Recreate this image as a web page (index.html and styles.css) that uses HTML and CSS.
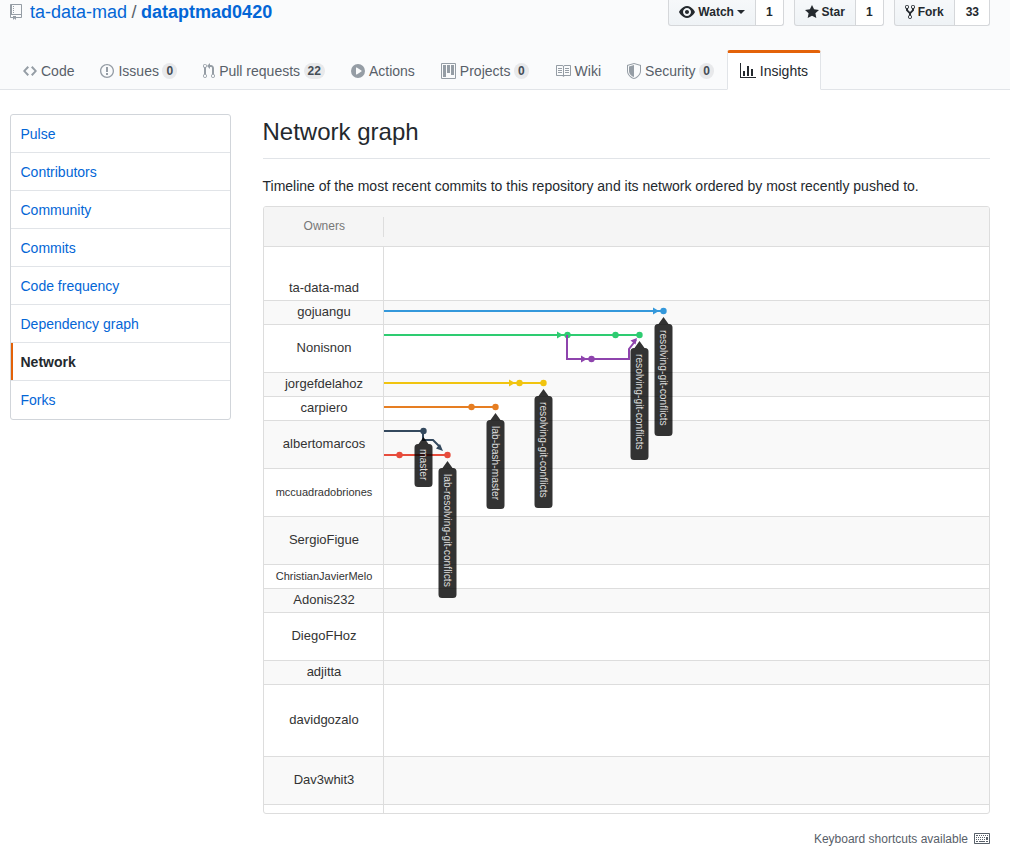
FILE: index.html
```html
<!DOCTYPE html>
<html lang="en">
<head>
  <meta charset="UTF-8" />
  <title>Network graph</title>
  <link rel="stylesheet" href="styles.css">
</head>
<body>
  <header class="pagehead">
    <div class="pagehead-top">
      <h2 class="repo-title">
        <svg class="repo-icon" width="12" height="16" viewBox="0 0 12 16"><path d="M4 9H3V8h1v1zm0-3H3v1h1V6zm0-2H3v1h1V4zm0-2H3v1h1V2zm8-1v12c0 .55-.45 1-1 1H6v2l-1.500-1.500L3 16v-2H1c-.55 0-1-.45-1-1V1c0-.55.45-1 1-1h10c.55 0 1 .45 1 1zm-1 10H1v2h2v-1h3v1h5v-2zm0-10H2v9h9V1z"/></svg>
        <a href="#">ta-data-mad</a><span class="slash">/</span><a href="#"><strong>dataptmad0420</strong></a>
      </h2>
      <div class="actions">
        <div class="btn-pair">
          <a class="btn" href="#"><svg width="16" height="16" viewBox="0 0 16 16"><path d="M8.06 2C3 2 0 8 0 8s3 6 8.06 6C13 14 16 8 16 8s-3-6-7.94-6zM8 12c-2.2 0-4-1.78-4-4 0-2.2 1.8-4 4-4 2.22 0 4 1.8 4 4 0 2.22-1.78 4-4 4zm2-4c0 1.11-.89 2-2 2-1.11 0-2-.89-2-2 0-1.11.89-2 2-2 1.11 0 2 .89 2 2z"/></svg>Watch<span class="caret"></span></a>
          <a class="count" href="#">1</a>
        </div>
        <div class="btn-pair">
          <a class="btn" href="#"><svg width="14" height="16" viewBox="0 0 14 16"><path d="M14 6l-4.900-.64L7 1 4.900 5.360 0 6l3.600 3.260L2.670 14 7 11.670 11.330 14l-.93-4.740L14 6z"/></svg>Star</a>
          <a class="count" href="#">1</a>
        </div>
        <div class="btn-pair">
          <a class="btn" href="#"><svg width="10" height="16" viewBox="0 0 10 16"><path d="M8 1a1.993 1.993 0 00-1 3.72V6L5 8 3 6V4.72A1.993 1.993 0 002 1a1.993 1.993 0 00-1 3.72V6.5l3 3v1.78A1.993 1.993 0 005 15a1.993 1.993 0 001-3.72V9.5l3-3V4.72A1.993 1.993 0 008 1zM2 4.2C1.34 4.2.8 3.65.8 3c0-.65.55-1.2 1.2-1.2.65 0 1.2.55 1.2 1.2 0 .65-.55 1.2-1.2 1.2zm3 10c-.66 0-1.2-.55-1.2-1.2 0-.65.55-1.2 1.2-1.2.65 0 1.2.55 1.2 1.2 0 .65-.55 1.2-1.2 1.2zm3-10c-.66 0-1.2-.55-1.2-1.2 0-.65.55-1.2 1.2-1.2.65 0 1.2.55 1.2 1.2 0 .65-.55 1.2-1.2 1.2z"/></svg>Fork</a>
          <a class="count" href="#">33</a>
        </div>
      </div>
    </div>
    <nav class="reponav">
      <a class="tab" href="#"><svg width="14" height="16" viewBox="0 0 14 16"><path d="M9.5 3L8 4.5 11.5 8 8 11.5 9.5 13 14 8 9.5 3zm-5 0L0 8l4.5 5L6 11.5 2.5 8 6 4.5 4.5 3z"/></svg>Code</a>
      <a class="tab" href="#"><svg width="14" height="16" viewBox="0 0 14 16"><path d="M7 2.3c3.14 0 5.7 2.56 5.7 5.7s-2.56 5.7-5.7 5.7A5.71 5.71 0 011.3 8c0-3.14 2.56-5.7 5.7-5.7zM7 1C3.14 1 0 4.14 0 8s3.14 7 7 7 7-3.14 7-7-3.14-7-7-7zm1 3H6v5h2V4zm0 6H6v2h2v-2z"/></svg>Issues<span class="counter">0</span></a>
      <a class="tab" href="#"><svg width="12" height="16" viewBox="0 0 12 16"><path d="M11 11.28V5c-.03-.78-.34-1.47-.94-2.06C9.46 2.35 8.78 2.03 8 2H7V0L4 3l3 3V4h1c.27.02.48.11.69.31.21.2.3.42.31.69v6.28A1.993 1.993 0 0010 15a1.993 1.993 0 001-3.72zm-1 2.92c-.66 0-1.2-.55-1.2-1.2 0-.65.55-1.2 1.2-1.2.65 0 1.2.55 1.2 1.2 0 .65-.55 1.2-1.2 1.2zM4 3c0-1.11-.89-2-2-2a1.993 1.993 0 00-1 3.72v6.56A1.993 1.993 0 002 15a1.993 1.993 0 001-3.72V4.72c.59-.34 1-.98 1-1.72zm-.8 10c0 .66-.55 1.2-1.2 1.2-.65 0-1.2-.55-1.2-1.2 0-.65.55-1.2 1.2-1.2.65 0 1.2.55 1.2 1.2zM2 4.2C1.34 4.2.8 3.65.8 3c0-.65.55-1.2 1.2-1.2.65 0 1.2.55 1.2 1.2 0 .65-.55 1.2-1.2 1.2z"/></svg>Pull requests<span class="counter">22</span></a>
      <a class="tab" href="#"><svg width="14" height="16" viewBox="0 0 14 16"><path d="M14 8A7 7 0 110 8a7 7 0 0114 0zm-8.223 3.482l4.599-3.066a.5.5 0 000-.832L5.777 4.518A.5.5 0 005 4.934v6.132a.5.5 0 00.777.416z"/></svg>Actions</a>
      <a class="tab" href="#"><svg width="15" height="16" viewBox="0 0 15 16"><path d="M10 12h3V2h-3v10zm-4-2h3V2H6v8zm-4 4h3V2H2v12zm-1 1h13V1H1v14zM14 0H1a1 1 0 00-1 1v14a1 1 0 001 1h13a1 1 0 001-1V1a1 1 0 00-1-1z"/></svg>Projects<span class="counter">0</span></a>
      <a class="tab" href="#"><svg width="16" height="16" viewBox="0 0 16 16"><path d="M3 5h4v1H3V5zm0 3h4V7H3v1zm0 2h4V9H3v1zm11-5h-4v1h4V5zm0 2h-4v1h4V7zm0 2h-4v1h4V9zm2-6v9c0 .55-.45 1-1 1H9.5l-1 1-1-1H2c-.55 0-1-.45-1-1V3c0-.55.45-1 1-1h5.5l1 1 1-1H15c.55 0 1 .45 1 1zm-8 .5L7.5 3H2v9h6V3.5zm7-.5H9.5l-.5.5V12h6V3z"/></svg>Wiki</a>
      <a class="tab" href="#"><svg width="14" height="16" viewBox="0 0 14 16"><path d="M0 2l7-2 7 2v6.02C14 12.69 8.69 16 7 16c-1.69 0-7-3.31-7-7.98V2zm1 .75L7 1l6 1.75v5.268C13 12.104 8.449 15 7 15c-1.449 0-6-2.896-6-6.982V2.75zm1 .75L7 2v12c-1.207 0-5-2.482-5-5.985V3.5z"/></svg>Security<span class="counter">0</span></a>
      <a class="tab selected" href="#"><svg width="16" height="16" viewBox="0 0 16 16"><path d="M16 14v1H0V0h1v14h15zM5 13H3V8h2v5zm4 0H7V3h2v10zm4 0h-2V6h2v7z"/></svg>Insights</a>
    </nav>
  </header>

  <div class="layout">
    <nav class="menu">
      <a class="menu-item" href="#">Pulse</a>
      <a class="menu-item" href="#">Contributors</a>
      <a class="menu-item" href="#">Community</a>
      <a class="menu-item" href="#">Commits</a>
      <a class="menu-item" href="#">Code frequency</a>
      <a class="menu-item" href="#">Dependency graph</a>
      <a class="menu-item selected" href="#">Network</a>
      <a class="menu-item" href="#">Forks</a>
    </nav>

    <main class="content">
      <h1 class="subhead">Network graph</h1>
      <p class="intro">Timeline of the most recent commits to this repository and its network ordered by most recently pushed to.</p>

      <div class="network">
        <div class="network-head"><span class="owners-label">Owners</span></div>
        <div class="net-row h54 first"><span class="owner">ta-data-mad</span></div>
        <div class="net-row h24 alt"><span class="owner">gojuangu</span></div>
        <div class="net-row h48"><span class="owner">Nonisnon</span></div>
        <div class="net-row h24 alt"><span class="owner">jorgefdelahoz</span></div>
        <div class="net-row h24"><span class="owner">carpiero</span></div>
        <div class="net-row h48 alt"><span class="owner">albertomarcos</span></div>
        <div class="net-row h48"><span class="owner small">mccuadradobriones</span></div>
        <div class="net-row h48 alt"><span class="owner">SergioFigue</span></div>
        <div class="net-row h24"><span class="owner small">ChristianJavierMelo</span></div>
        <div class="net-row h24 alt"><span class="owner">Adonis232</span></div>
        <div class="net-row h48"><span class="owner">DiegoFHoz</span></div>
        <div class="net-row h24 alt"><span class="owner">adjitta</span></div>
        <div class="net-row h72"><span class="owner">davidgozalo</span></div>
        <div class="net-row h48 alt"><span class="owner">Dav3whit3</span></div>
        <div class="net-row last"><span class="owner"></span></div>

        <!-- viewBox uses page coordinates so commits read the same as the screenshot -->
        <svg class="graph" width="605" height="566" viewBox="384 247 605 566">
          <g class="branch" stroke="#3498db" fill="#3498db">
            <path class="ln" d="M384 311H663"/>
            <path class="hd" d="M653 307.500l6 3.500-6 3.500z"/>
            <circle cx="663.500" cy="311" r="3.200"/>
          </g>
          <g class="branch" stroke="#2ecc71" fill="#2ecc71">
            <path class="ln" d="M384 335H639"/>
            <path class="hd" d="M557 331.500l6 3.500-6 3.500z"/>
            <circle cx="567.500" cy="335" r="3.200"/>
            <circle cx="615.500" cy="335" r="3.200"/>
            <circle cx="639.500" cy="335" r="3.200"/>
          </g>
          <g class="branch" stroke="#8e44ad" fill="#8e44ad">
            <path class="ln" d="M567 335V359H629V349L636 340"/>
            <path class="hd" d="M581 355.500l6 3.500-6 3.500z"/>
            <path class="hd" d="M637 338l-1.500 6.500-5-4z"/>
            <circle cx="591.500" cy="359" r="3.200"/>
          </g>
          <g class="branch" stroke="#f1c40f" fill="#f1c40f">
            <path class="ln" d="M384 383H543"/>
            <path class="hd" d="M509 379.500l6 3.500-6 3.500z"/>
            <circle cx="519.500" cy="383" r="3.200"/>
            <circle cx="543.500" cy="383" r="3.200"/>
          </g>
          <g class="branch" stroke="#e67e22" fill="#e67e22">
            <path class="ln" d="M384 407H495"/>
            <circle cx="471.500" cy="407" r="3.200"/>
            <circle cx="495.500" cy="407" r="3.200"/>
          </g>
          <g class="branch" stroke="#34495e" fill="#34495e">
            <path class="ln" d="M384 431H423V440H433L440 447"/>
            <path class="hd" d="M443 451l-7-2.500 4-4.500z"/>
            <circle cx="423.500" cy="431" r="3.200"/>
          </g>
          <g class="branch" stroke="#e74c3c" fill="#e74c3c">
            <path class="ln" d="M384 455H447"/>
            <circle cx="399.500" cy="455" r="3.200"/>
            <circle cx="447.500" cy="455" r="3.200"/>
          </g>

          <path class="tag" d="M423.500 437l5 7h.5a3.500 3.500 0 013.500 3.500v36a3.500 3.500 0 01-3.500 3.500h-11a3.500 3.500 0 01-3.500-3.500v-36a3.500 3.500 0 013.500-3.500h.5z"/>
          <text class="tag-text" transform="translate(420 449) rotate(90)">master</text>

          <path class="tag" d="M447.500 461l5 7h.5a3.500 3.500 0 013.500 3.500v123a3.500 3.500 0 01-3.500 3.500h-11a3.500 3.500 0 01-3.500-3.500v-123a3.500 3.500 0 013.500-3.500h.5z"/>
          <text class="tag-text" transform="translate(444 474) rotate(90)">lab-resolving-git-conflicts</text>

          <path class="tag" d="M495.500 413l5 7h.5a3.500 3.500 0 013.500 3.500v82a3.500 3.500 0 01-3.500 3.500h-11a3.500 3.500 0 01-3.500-3.500v-82a3.500 3.500 0 013.500-3.500h.5z"/>
          <text class="tag-text" transform="translate(492 426) rotate(90)">lab-bash-master</text>

          <path class="tag" d="M543.500 389l5 7h.5a3.500 3.500 0 013.500 3.500v105a3.500 3.500 0 01-3.500 3.500h-11a3.500 3.500 0 01-3.500-3.500v-105a3.500 3.500 0 013.500-3.500h.5z"/>
          <text class="tag-text" transform="translate(540 402) rotate(90)">resolving-git-conflicts</text>

          <path class="tag" d="M639.500 341l5 7h.5a3.500 3.500 0 013.500 3.500v105a3.500 3.500 0 01-3.500 3.500h-11a3.500 3.500 0 01-3.500-3.500v-105a3.500 3.500 0 013.500-3.500h.5z"/>
          <text class="tag-text" transform="translate(636 354) rotate(90)">resolving-git-conflicts</text>

          <path class="tag" d="M663.500 317l5 7h.5a3.500 3.500 0 013.500 3.500v105a3.500 3.500 0 01-3.500 3.500h-11a3.500 3.500 0 01-3.500-3.500v-105a3.500 3.500 0 013.500-3.500h.5z"/>
          <text class="tag-text" transform="translate(660 330) rotate(90)">resolving-git-conflicts</text>
        </svg>
      </div>

      <div class="shortcuts">
        Keyboard shortcuts available
        <svg width="16" height="16" viewBox="0 0 16 16"><path d="M10 5H9V4h1v1zM3 6H2v1h1V6zm5-2H7v1h1V4zM4 4H2v1h2V4zm8 7h2v-1h-2v1zM8 7h1V6H8v1zm-4 3H2v1h2v-1zm8-6h-1v1h1V4zm2 0h-1v1h1V4zm-2 5h2V6h-2v3zm4-6v9c0 .55-.45 1-1 1H1c-.55 0-1-.45-1-1V3c0-.55.45-1 1-1h14c.55 0 1 .45 1 1zm-1 0H1v9h14V3zM6 7h1V6H6v1zm0-3H5v1h1V4zM4 7h1V6H4v1zm1 4h6v-1H5v1zm5-4h1V6h-1v1zM3 8H2v1h1V8zm5 0v1h1V8H8zM6 8v1h1V8H6zM5 8H4v1h1V8zm5 1h1V8h-1v1z"/></svg>
      </div>
    </main>
  </div>
</body>
</html>
```

FILE: styles.css
```css
* {
  box-sizing: border-box;
}
body {
  margin: 0;
  height: 861px;
  overflow: hidden;
  background: #fff;
  color: #24292e;
  font-family: "Liberation Sans", Arial, sans-serif;
  font-size: 14px;
  line-height: 20px;
}
a {
  color: #0366d6;
  text-decoration: none;
}
svg {
  fill-rule: evenodd;
}

/* repo header */
.pagehead {
  height: 90px;
  background: #fafbfc;
  border-bottom: 1px solid #e1e4e8;
}
.pagehead-top {
  height: 50px;
  padding: 0 20px 0 10px;
  display: flex;
  justify-content: space-between;
  align-items: flex-start;
}
.repo-title {
  margin: 0;
  font-size: 18px;
  font-weight: 400;
  line-height: 24px;
  color: #586069;
}
.repo-icon {
  fill: #959da5;
  margin-right: 3px;
  vertical-align: -2px;
}
.slash {
  margin: 0 0.25em;
}
.actions {
  display: flex;
  gap: 10px;
}
.btn-pair {
  display: flex;
  height: 26px;
  font-size: 12px;
  font-weight: 700;
}
.btn,
.count {
  display: flex;
  align-items: center;
  padding-bottom: 2px;
  color: #24292e;
  border: 1px solid #d5d7da;
  border-top: 0;
}
.btn {
  gap: 3px;
  padding-left: 10px;
  padding-right: 10px;
  background: linear-gradient(#f6f8fa, #eff3f6);
  border-radius: 0 0 0 3px;
}
.btn svg {
  fill: #24292e;
}
.count {
  padding-left: 10px;
  padding-right: 10px;
  background: #fff;
  border-left: 0;
  border-radius: 0 0 3px 0;
}
.btn-pair:last-child .count {
  padding-left: 11px;
}
.caret {
  width: 0;
  height: 0;
  border: 4px solid transparent;
  border-top-color: #24292e;
  border-bottom: 0;
}

/* tabs */
.reponav {
  display: flex;
  padding-left: 10px;
}
.tab {
  display: flex;
  align-items: center;
  height: 40px;
  padding: 0 12px;
  color: #586069;
  border: 1px solid transparent;
  border-top-width: 3px;
  border-radius: 3px 3px 0 0;
}
.tab svg {
  fill: #959da5;
  margin-right: 4px;
}
.tab.selected {
  color: #24292e;
  background: #fff;
  border-color: #e1e4e8 #e1e4e8 #fff;
  border-top-color: #e36209;
}
.tab.selected svg {
  fill: #24292e;
}
.counter {
  margin-left: 3.500px;
  padding: 2px 4px;
  font-size: 12px;
  font-weight: 700;
  line-height: 12px;
  color: #444d56;
  background: rgba(27, 31, 35, 0.08);
  border-radius: 20px;
}

/* page body */
.layout {
  display: flex;
  gap: 31.500px;
  padding: 24px 20px 0 10px;
}
.menu {
  width: 221px;
  height: 306px;
  flex: none;
  background: #fff;
  border: 1px solid #d1d5da;
  border-radius: 3px;
}
.menu-item {
  display: block;
  height: 38px;
  padding: 9px 10px 9px 9.500px;
  border-bottom: 1px solid #e1e4e8;
}
.menu-item:last-child {
  height: 37px;
  border-bottom: 0;
}
.menu-item.selected {
  font-weight: 700;
  color: #24292e;
  box-shadow: inset 2px 0 0 #e36209;
}
.content {
  flex: 1;
  min-width: 0;
}
.subhead {
  margin: 0;
  height: 45px;
  font-size: 24px;
  font-weight: 400;
  line-height: 36px;
  border-bottom: 1px solid #e1e4e8;
}
.intro {
  margin: 17px 0 10px;
}

/* network graph */
.network {
  position: relative;
  height: 608px;
  background: #fff;
  border: 1px solid #ddd;
  border-radius: 3px;
  overflow: hidden;
}
.network-head {
  height: 40px;
  padding-top: 10px;
  background: #f5f5f5;
  border-bottom: 1px solid #ddd;
}
.owners-label {
  display: block;
  width: 120.500px;
  height: 20px;
  padding-left: 2px;
  font-size: 12px;
  line-height: 19px;
  text-align: center;
  color: #777;
  border-right: 1px solid #ddd;
}
.net-row {
  display: flex;
  border-bottom: 1px solid #ddd;
}
.net-row.alt {
  background: #f9f9f9;
}
.net-row.h24 { height: 24px; }
.net-row.h48 { height: 48px; }
.net-row.h54 { height: 54px; }
.net-row.h72 { height: 72px; }
.net-row.last {
  height: 8px;
  border-bottom: 0;
}
.owner {
  width: 120.500px;
  display: flex;
  align-items: center;
  justify-content: center;
  padding: 0 0 2px 1.500px;
  font-size: 13px;
  color: #333;
  border-right: 1px solid #ddd;
}
.owner.small {
  font-size: 11px;
}
.net-row.first .owner {
  padding-top: 31px;
}
.graph {
  position: absolute;
  left: 120.500px;
  top: 40px;
}
.ln {
  fill: none;
  stroke-width: 2;
}
.hd,
.branch circle {
  stroke: none;
}
.tag {
  fill: #000;
  opacity: 0.8;
}
.tag-text {
  font-size: 10.250px;
  fill: #ddd;
}

/* footer hint */
.shortcuts {
  display: flex;
  justify-content: flex-end;
  align-items: center;
  gap: 6px;
  margin-top: 15px;
  font-size: 12px;
  color: #586069;
}
.shortcuts svg {
  fill: #586069;
}
```
